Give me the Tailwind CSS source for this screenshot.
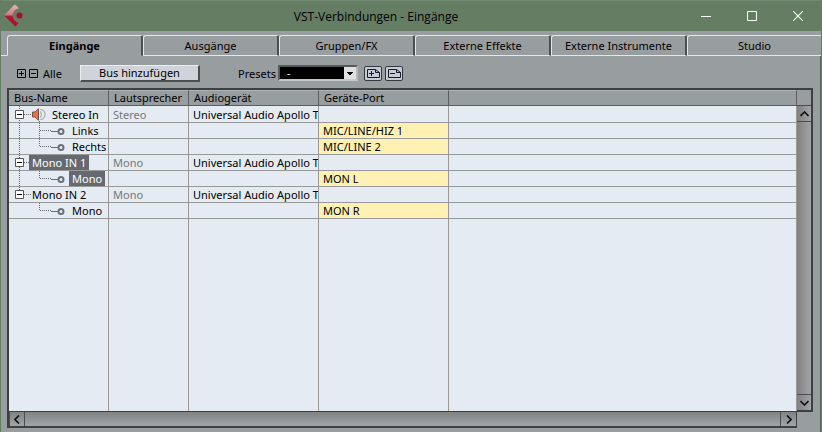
<!DOCTYPE html>
<html lang="de">
<head>
    <meta charset="UTF-8">
    <meta name="viewport" content="width=device-width, initial-scale=1.0">
    <title>VST-Verbindungen - Eingänge</title>
    <script src="https://cdn.jsdelivr.net/npm/@tailwindcss/browser@4"></script>
</head>
<body class="h-screen overflow-hidden flex flex-col border-x border-[#647d63] bg-[#989da0] font-['Noto_Sans','Open_Sans',sans-serif] text-[11px] leading-[15px] text-black">

    <!-- Title bar -->
    <header class="h-[31px] shrink-0 flex items-center bg-[#647d63] border-t border-[#728a71]">
        <div class="w-[68px] pl-[3px]">
            <svg class="w-5 h-6" viewBox="0 0 20 24">
                <defs>
                    <linearGradient id="logo" x1="0" y1="0" x2="0" y2="1">
                        <stop offset="0" stop-color="#e3b5b8"/>
                        <stop offset="0.45" stop-color="#cf8088"/>
                        <stop offset="0.55" stop-color="#b01430"/>
                        <stop offset="1" stop-color="#a80f2c"/>
                    </linearGradient>
                </defs>
                <path d="M0 11.500L10.500 0.500Q13 1.500 15 4.500Q9 5.500 8.500 11.500Q9 17 14.500 19L11.500 22.500Z" fill="url(#logo)"/>
                <circle cx="15.500" cy="11.500" r="3" fill="#a80f2c"/>
            </svg>
        </div>
        <h1 class="flex-1 text-center font-['Open_Sans',sans-serif] text-[12px]">VST-Verbindungen - Eingänge</h1>
        <div class="w-[138px] flex">
            <button class="w-[46px] h-7 flex items-center justify-center" aria-label="Minimieren">
                <svg class="w-[10px] h-[10px]" viewBox="0 0 10 10" stroke="#fff"><path d="M0 5.500H10"/></svg>
            </button>
            <button class="w-[46px] h-7 flex items-center justify-center" aria-label="Maximieren">
                <svg class="w-[10px] h-[10px]" viewBox="0 0 10 10" fill="none" stroke="#fff"><path d="M.5 .5H9.500V9.500H.5Z"/></svg>
            </button>
            <button class="w-[46px] h-7 flex items-center justify-center" aria-label="Schließen">
                <svg class="w-[10px] h-[10px]" viewBox="0 0 10 10" stroke="#fff" stroke-width="1.200"><path d="M0 0L10 10M10 0L0 10"/></svg>
            </button>
        </div>
    </header>

    <!-- Tabs -->
    <nav class="mt-1 h-[21px] shrink-0 flex">
        <div class="w-[6px] border-b border-[#e4e6e7]"></div>
        <button class="flex-1 rounded-t-[3px] border-l border-t border-b border-l-[#e4e6e7] border-t-[#e4e6e7] border-b-[#989da0] border-r-2 border-r-[#4b4f4e] font-bold">Eingänge</button>
        <button class="flex-1 rounded-t-[3px] border-l border-t border-b border-[#e4e6e7] border-r-2 border-r-[#4b4f4e]">Ausgänge</button>
        <button class="flex-1 rounded-t-[3px] border-l border-t border-b border-[#e4e6e7] border-r-2 border-r-[#4b4f4e]">Gruppen/FX</button>
        <button class="flex-1 rounded-t-[3px] border-l border-t border-b border-[#e4e6e7] border-r-2 border-r-[#4b4f4e]">Externe Effekte</button>
        <button class="flex-1 rounded-t-[3px] border-l border-t border-b border-[#e4e6e7] border-r-2 border-r-[#4b4f4e]">Externe Instrumente</button>
        <button class="flex-1 rounded-tl-[3px] border-l border-t border-b border-[#e4e6e7]">Studio</button>
    </nav>

    <!-- Toolbar -->
    <div class="h-8 shrink-0 flex items-center pl-4 pt-[2px] border-r border-[#5d6264]">
        <button class="mr-[3px]" aria-label="Alle aufklappen">
            <svg class="w-[9px] h-[9px]" viewBox="0 0 9 9" fill="none" stroke="#000"><path d="M.5 .5H8.500V8.500H.5ZM2 4.500H7M4.500 2V7"/></svg>
        </button>
        <button class="mr-1" aria-label="Alle zuklappen">
            <svg class="w-[9px] h-[9px]" viewBox="0 0 9 9" fill="none" stroke="#000"><path d="M.5 .5H8.500V8.500H.5ZM2 4.500H7"/></svg>
        </button>
        <span class="w-[38px] pl-px">Alle</span>
        <button class="w-[120px] h-[17px] bg-[#d0d3d9] border-t border-l border-[#eceef0] border-r-2 border-b-2 border-r-[#4b4f50] border-b-[#4b4f50] leading-[14px]">Bus hinzufügen</button>
        <label for="presets" class="ml-[38px] w-10">Presets</label>
        <div class="relative w-[80px] h-4">
            <select id="presets" class="block w-full h-full appearance-none bg-black text-white pl-[7px] border-2 border-[#55595a] border-b-[#c5c8ca] border-r-[#b5b8ba] leading-3">
                <option>-</option>
            </select>
            <svg class="absolute right-[2px] top-[2px] w-3 h-3 pointer-events-none" viewBox="0 0 12 12">
                <path d="M0 0H12V12H0Z" fill="#dfe0e2"/>
                <path d="M3 5H9V6H8V7H7V8H5V7H4V6H3Z"/>
            </svg>
        </div>
        <button class="ml-[6px]" aria-label="Preset speichern">
            <svg class="w-[18px] h-[15px]" viewBox="0 0 18 15">
                <rect x=".5" y=".5" width="17" height="14" rx="1.500" fill="#c7cbd5" stroke="#33383f"/>
                <path d="M3.500 3.500H11.500L15.500 6.500V11.500H3.500ZM11.500 3.500V6.500H15.500M5 7.500H10M7.500 5V10" fill="none" stroke="#101a2c"/>
            </svg>
        </button>
        <button class="ml-[3px]" aria-label="Preset entfernen">
            <svg class="w-[18px] h-[15px]" viewBox="0 0 18 15">
                <rect x=".5" y=".5" width="17" height="14" rx="1.500" fill="#c7cbd5" stroke="#33383f"/>
                <path d="M3.500 3.500H11.500L15.500 6.500V11.500H3.500ZM11.500 3.500V6.500H15.500M5 7.500H10" fill="none" stroke="#101a2c"/>
            </svg>
        </button>
    </div>

    <!-- Bus list -->
    <main class="flex-1 min-h-0 flex pl-[6px] pr-[7px] pb-1 border-r border-[#5d6264]">
        <div class="flex-1 min-w-0 flex flex-col border-y-2 border-l-2 border-[#3c4042]">
            <div class="flex-1 min-h-0">
                <table class="w-full h-full table-fixed border-separate border-spacing-0 bg-[#e4ebf3] whitespace-nowrap [&_td]:border-r [&_td]:border-b [&_td]:border-[#999] [&_td]:overflow-hidden [&_td]:p-0 [&_th]:border-r [&_th]:border-b [&_th]:border-[#5a5e60] [&_th]:border-t [&_th]:border-t-[#afb3b5] [&_th]:p-0 [&_th]:pl-[5px] [&_th]:text-left [&_th]:font-normal [&_th]:leading-[14px]">
                    <colgroup>
                        <col class="w-[100px]">
                        <col class="w-[80px]">
                        <col class="w-[130px]">
                        <col class="w-[130px]">
                        <col>
                    </colgroup>
                    <thead class="bg-[#989da0]">
                        <tr class="h-4">
                            <th>Bus-Name</th>
                            <th>Lautsprecher</th>
                            <th>Audiogerät</th>
                            <th>Geräte-Port</th>
                            <th></th>
                        </tr>
                    </thead>
                    <tbody>
                        <tr class="h-[17px]">
                            <td>
                                <div class="flex items-center">
                                    <svg class="w-[22px] h-4 overflow-visible" viewBox="0 0 22 16" fill="none" stroke="#666">
                                        <path d="M10.500 0V17M15 8.500H22" stroke-dasharray="1 1"/>
                                        <path d="M6.500 4.500H14.500V12.500H6.500Z" fill="#fff" stroke="#555"/>
                                        <path d="M8 8.500H13" stroke="#000"/>
                                    </svg>
                                    <svg class="w-[21px] h-4 overflow-visible" viewBox="0 0 21 16" fill="none">
                                        <path d="M1.500 6V11H4L7 14.500V2.500L4 6Z" fill="#f26b3c"/>
                                        <path d="M4 6H1.500V11H4M7.500 2.500V14.500" stroke="#70504a"/>
                                        <path d="M4 6L7 3M4 11L7 14" stroke="#b05a3c"/>
                                        <path d="M9.500 5.500Q11.500 8.500 9.500 11.500M9.500 3.500Q14 4 14 8.500T9.500 13.500" stroke="#999"/>
                                        <path d="M8.500 15V17" stroke="#666" stroke-dasharray="1 1"/>
                                    </svg>
                                    <span>Stereo In</span>
                                </div>
                            </td>
                            <td><div class="pl-1 text-[#777]">Stereo</div></td>
                            <td><div class="pl-1 overflow-hidden">Universal Audio Apollo T</div></td>
                            <td></td>
                            <td></td>
                        </tr>
                        <tr class="h-4">
                            <td>
                                <div class="flex">
                                    <svg class="w-[63px] h-[15px] overflow-visible" viewBox="0 0 63 15" fill="none" stroke="#666">
                                        <path d="M10.500 0V16M30.500 0V16M31 7.500H42" stroke-dasharray="1 1"/>
                                        <path d="M42 8.500H49" stroke="#6b7178"/>
                                        <circle cx="52" cy="8.500" r="2.500" stroke="#6b7178" stroke-width="2"/>
                                    </svg>
                                    <span>Links</span>
                                </div>
                            </td>
                            <td></td>
                            <td></td>
                            <td class="bg-[#fff0b3]"><div class="pl-1">MIC/LINE/HIZ 1</div></td>
                            <td></td>
                        </tr>
                        <tr class="h-4">
                            <td>
                                <div class="flex">
                                    <svg class="w-[63px] h-[15px] overflow-visible" viewBox="0 0 63 15" fill="none" stroke="#666">
                                        <path d="M10.500 0V16M30.500 0V8M31 7.500H42" stroke-dasharray="1 1"/>
                                        <path d="M42 8.500H49" stroke="#6b7178"/>
                                        <circle cx="52" cy="8.500" r="2.500" stroke="#6b7178" stroke-width="2"/>
                                    </svg>
                                    <span>Rechts</span>
                                </div>
                            </td>
                            <td></td>
                            <td></td>
                            <td class="bg-[#fff0b3]"><div class="pl-1">MIC/LINE 2</div></td>
                            <td></td>
                        </tr>
                        <tr class="h-4">
                            <td>
                                <div class="flex">
                                    <svg class="w-5 h-[15px] overflow-visible" viewBox="0 0 20 15" fill="none" stroke="#666">
                                        <path d="M10.500 0V16M15 7.500H20" stroke-dasharray="1 1"/>
                                        <path d="M6.500 3.500H14.500V11.500H6.500Z" fill="#fff" stroke="#555"/>
                                        <path d="M8 7.500H13" stroke="#000"/>
                                    </svg>
                                    <span class="px-[3px] bg-[#666a70] text-white">Mono IN 1</span>
                                </div>
                            </td>
                            <td><div class="pl-1 text-[#777]">Mono</div></td>
                            <td><div class="pl-1 overflow-hidden">Universal Audio Apollo T</div></td>
                            <td></td>
                            <td></td>
                        </tr>
                        <tr class="h-4">
                            <td>
                                <div class="flex">
                                    <svg class="w-[60px] h-[15px] overflow-visible" viewBox="0 0 60 15" fill="none" stroke="#666">
                                        <path d="M10.500 0V16M30.500 0V8M31 7.500H42" stroke-dasharray="1 1"/>
                                        <path d="M42 8.500H49" stroke="#6b7178"/>
                                        <circle cx="52" cy="8.500" r="2.500" stroke="#6b7178" stroke-width="2"/>
                                    </svg>
                                    <span class="px-[3px] bg-[#666a70] text-white">Mono</span>
                                </div>
                            </td>
                            <td></td>
                            <td></td>
                            <td class="bg-[#fff0b3]"><div class="pl-1">MON L</div></td>
                            <td></td>
                        </tr>
                        <tr class="h-4">
                            <td>
                                <div class="flex">
                                    <svg class="w-[23px] h-[15px] overflow-visible" viewBox="0 0 23 15" fill="none" stroke="#666">
                                        <path d="M10.500 0V4M15 7.500H22" stroke-dasharray="1 1"/>
                                        <path d="M6.500 3.500H14.500V11.500H6.500Z" fill="#fff" stroke="#555"/>
                                        <path d="M8 7.500H13" stroke="#000"/>
                                    </svg>
                                    <span>Mono IN 2</span>
                                </div>
                            </td>
                            <td><div class="pl-1 text-[#777]">Mono</div></td>
                            <td><div class="pl-1 overflow-hidden">Universal Audio Apollo T</div></td>
                            <td></td>
                            <td></td>
                        </tr>
                        <tr class="h-4">
                            <td>
                                <div class="flex">
                                    <svg class="w-[63px] h-[15px] overflow-visible" viewBox="0 0 63 15" fill="none" stroke="#666">
                                        <path d="M30.500 0V8M31 7.500H42" stroke-dasharray="1 1"/>
                                        <path d="M42 8.500H49" stroke="#6b7178"/>
                                        <circle cx="52" cy="8.500" r="2.500" stroke="#6b7178" stroke-width="2"/>
                                    </svg>
                                    <span>Mono</span>
                                </div>
                            </td>
                            <td></td>
                            <td></td>
                            <td class="bg-[#fff0b3]"><div class="pl-1">MON R</div></td>
                            <td></td>
                        </tr>
                        <!-- Empty space below the last bus -->
                        <tr class="[&>td]:border-b-0">
                            <td></td>
                            <td></td>
                            <td></td>
                            <td></td>
                            <td></td>
                        </tr>
                    </tbody>
                </table>
            </div>
            <!-- Horizontal scrollbar -->
            <div class="h-[15px] shrink-0 flex border-t border-r border-[#3c4042] bg-linear-to-b from-[#808282] to-[#a2a5a6]">
                <button class="w-4 flex items-center justify-center border-x border-[#4a4e50]" aria-label="Nach links">
                    <svg class="w-[6px] h-[9px]" viewBox="0 0 6 9" fill="none" stroke="#111" stroke-width="1.600"><path d="M5 .5L1 4.500L5 8.500"/></svg>
                </button>
                <div class="flex-1"></div>
                <button class="w-4 flex items-center justify-center border-l border-[#4a4e50]" aria-label="Nach rechts">
                    <svg class="w-[6px] h-[9px]" viewBox="0 0 6 9" fill="none" stroke="#111" stroke-width="1.600"><path d="M1 .5L5 4.500L1 8.500"/></svg>
                </button>
            </div>
        </div>
        <!-- Vertical scrollbar -->
        <div class="w-4 shrink-0 mb-4 flex flex-col border-t-2 border-r-2 border-b-2 border-[#3c4042]">
            <div class="h-4 border-b border-[#4a4e50]"></div>
            <div class="flex-1 flex flex-col bg-linear-to-r from-[#808282] to-[#a2a5a6]">
                <button class="h-4 flex items-center justify-center border-b border-[#4a4e50]" aria-label="Nach oben">
                    <svg class="w-[9px] h-[6px]" viewBox="0 0 9 6" fill="none" stroke="#111" stroke-width="1.600"><path d="M.5 5L4.500 1L8.500 5"/></svg>
                </button>
                <div class="flex-1"></div>
                <button class="h-4 flex items-center justify-center border-t border-[#4a4e50]" aria-label="Nach unten">
                    <svg class="w-[9px] h-[6px]" viewBox="0 0 9 6" fill="none" stroke="#111" stroke-width="1.600"><path d="M.5 1L4.500 5L8.500 1"/></svg>
                </button>
            </div>
        </div>
    </main>
</body>
</html>
